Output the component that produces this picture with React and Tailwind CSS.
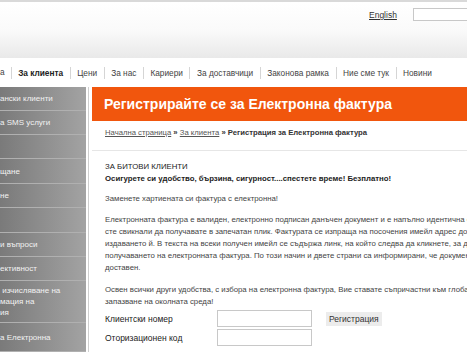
export default function App() {
  const navItems = ['За клиента', 'Цени', 'За нас', 'Кариери', 'За доставчици', 'Законова рамка', 'Ние сме тук', 'Новини'];

  // sidebar rows: text fragments (the page is scrolled, left side is cut) and row heights
  const sideItems = [
    { lines: ['ански клиенти'], h: 'h-[24px]' },
    { lines: ['а SMS услуги'], h: 'h-[24px]' },
    { lines: [], h: 'h-[24px]' },
    { lines: ['щане'], h: 'h-[25px]' },
    { lines: ['не'], h: 'h-[24px]' },
    { lines: [], h: 'h-[25px]' },
    { lines: ['и въпроси'], h: 'h-[24px]' },
    { lines: ['ективност'], h: 'h-[24px]' },
    { lines: ['\u00a0изчисляване на', 'мация на', 'ия'], h: 'h-[42px]' },
    { lines: ['а Електронна'], h: 'h-[29px]' },
  ];

  return (
    <div className="w-[467px] h-[360px] overflow-hidden bg-white font-['Liberation_Sans',Arial,sans-serif] text-[#444]">
      {/* Header */}
      <div className="h-[58px] border-t-2 border-[#d9d9d9] bg-gradient-to-b from-white via-[#fafafa] to-[#e9e9e9] flex items-start pt-[6px] pl-[369px] overflow-hidden">
        <a href="#" className="text-[8.5px] text-[#333] underline mt-[1px] mr-[16px]">English</a>
        <input className="w-[70px] shrink-0 h-[13px] border border-[#c8c8c8] bg-white" />
      </div>

      {/* Top navigation */}
      <div className="h-[29px] flex items-center text-[8.3px] text-[#444] whitespace-nowrap">
        <span className="pr-[6px]">а</span>
        {navItems.map((item, i) => (
          <span
            key={item}
            className={`border-l border-[#d5d5d5] px-[6.5px] leading-[12px] ${i === 0 ? 'font-bold text-[#222]' : ''}`}
          >
            {item}
          </span>
        ))}
      </div>

      <div className="flex">
        {/* Sidebar */}
        <div className="w-[86px] h-[265px] shrink-0 bg-gradient-to-r from-[#7a7a7a] to-[#a3a3a3] overflow-hidden">
          {sideItems.map((item, i) => (
            <div
              key={i}
              className={`${item.h} border-b border-[#b0b0b0] flex flex-col justify-center text-[8px] leading-[11px] text-[#f2f2f2] whitespace-nowrap`}
            >
              {item.lines.map((l) => (
                <span key={l}>{l}</span>
              ))}
            </div>
          ))}
        </div>

        {/* Content */}
        <div className="ml-[2px] border-l border-[#cfcfcf] pl-[3px] h-[265px] flex-1 min-w-0 overflow-hidden">
          <div className="h-[34px] bg-[#f1560d] flex items-center pl-[12px] whitespace-nowrap">
            <h1 className="text-white font-bold text-[14px]">Регистрирайте се за Електронна фактура</h1>
          </div>

          <div className="pl-[13px] pt-[6px] pb-[11px] border-b border-[#e6e6e6] text-[7.7px] leading-[12px] whitespace-nowrap">
            <a href="#" className="underline text-[#555]">Начална страница</a>
            <span className="font-bold text-[#333]"> » </span>
            <a href="#" className="underline text-[#555]">За клиента</a>
            <span className="font-bold text-[#333]"> » Регистрация за Електронна фактура</span>
          </div>

          <div className="pl-[13px] text-[7.8px] leading-[12px] whitespace-nowrap">
            <div className="mt-[10px] text-[#222]">
              <p>ЗА БИТОВИ КЛИЕНТИ</p>
              <p className="font-bold">Осигурете си удобство, бързина, сигурност....спестете време! Безплатно!</p>
            </div>
            <p className="mt-[8px]">Заменете хартиената си фактура с електронна!</p>
            <p className="mt-[9px]">
              Електронната фактура е валиден, електронно подписан данъчен документ и е напълно идентична с тази, която
              <br />
              сте свикнали да получавате в запечатан плик. Фактурата се изпраща на посочения имейл адрес до 5 дни след
              <br />
              издаването й. В текста на всеки получен имейл се съдържа линк, на който следва да кликнете, за да потвърдите
              <br />
              получаването на електронната фактура. По този начин и двете страни са информирани, че документът е
              <br />
              доставен.
            </p>
            <p className="mt-[10px]">
              Освен всички други удобства, с избора на електронна фактура, Вие ставате съпричастни към глобалната грижа за
              <br />
              запазване на околната среда!
            </p>

            <div className="mt-[2px] grid grid-cols-[112px_95px_auto] gap-y-[2px] items-center text-[8.5px] text-[#222]">
              <span>Клиентски номер</span>
              <input className="h-[17px] border border-[#c8c8c8] bg-white" />
              <button className="ml-[14px] justify-self-start h-[14px] px-[3px] bg-[#ececec] text-[#333] text-[8.5px] leading-[14px]">
                Регистрация
              </button>
              <span>Оторизационен код</span>
              <input className="h-[17px] border border-[#c8c8c8] bg-white" />
              <span />
            </div>
          </div>
        </div>
      </div>
    </div>
  );
}
